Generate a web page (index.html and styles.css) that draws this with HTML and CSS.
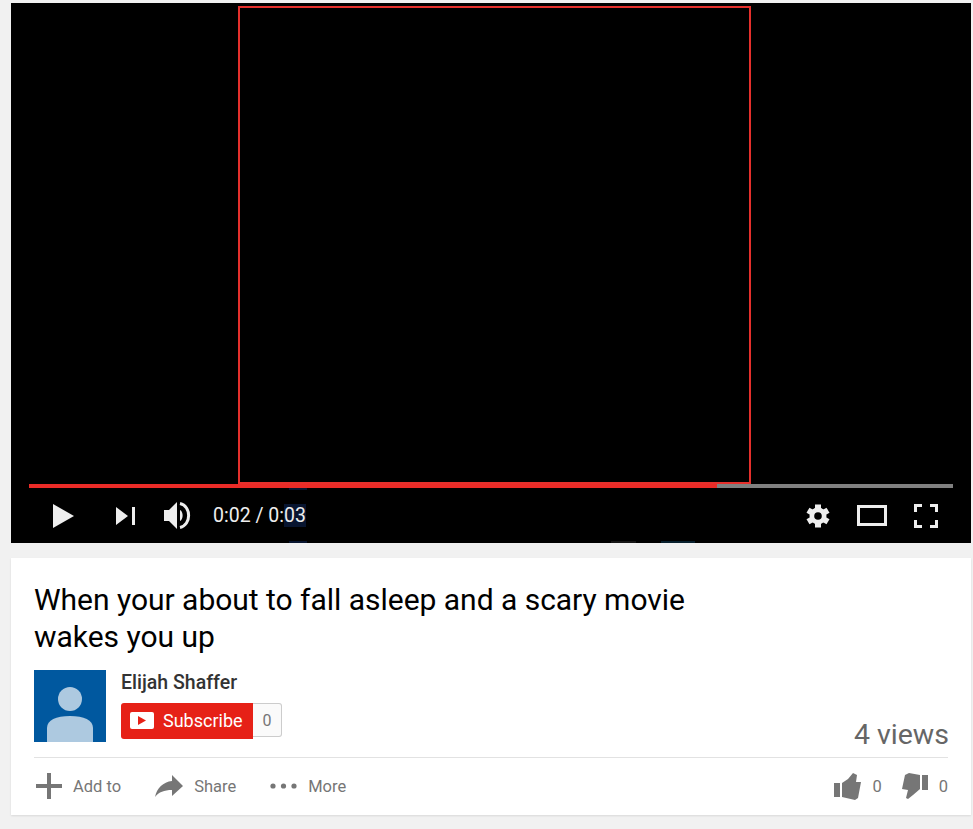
FILE: index.html
```html
<!DOCTYPE html>
<html lang="en">
<head>
<meta charset="UTF-8" />
<title>When your about to fall asleep and a scary movie wakes you up</title>
<link rel="stylesheet" href="styles.css">
</head>
<body>

<div class="player">
  <div class="stage">
    <div class="frame"></div>
  </div>
  <div class="progress">
    <div class="progress-played"></div>
  </div>
  <div class="controls">
    <svg class="ctl-play" width="22" height="24" viewBox="0 0 22 24"><path d="M0 0L21 12L0 24Z" fill="#eee"/></svg>
    <svg class="ctl-next" width="19" height="18" viewBox="0 0 19 18"><path d="M0 0L12 9L0 18Z M16 0H19V18H16Z" fill="#eee"/></svg>
    <svg class="ctl-volume" width="28" height="27" viewBox="0 0 28 27"><path d="M0 8H5L13 0V27L5 19H0Z" fill="#eee"/><path d="M16 8C19.500 9.500 19.500 17.500 16 19Z" fill="#eee"/><path d="M16 1.500C27.500 4 27.500 23 16 25.500" fill="none" stroke="#eee" stroke-width="3"/></svg>
    <div class="time">0:02 / 0:<span class="time-mark">03</span></div>
    <div class="controls-right">
      <svg class="ctl-gear" width="24" height="24" viewBox="0 0 24 24">
        <g stroke="#eee" stroke-width="6">
          <line x1="12" y1="0.500" x2="12" y2="23.500"/>
          <line x1="2" y1="6.250" x2="22" y2="17.750"/>
          <line x1="2" y1="17.750" x2="22" y2="6.250"/>
        </g>
        <circle cx="12" cy="12" r="8.500" fill="#eee"/>
        <circle cx="12" cy="12" r="3.800" fill="#000"/>
      </svg>
      <div class="ctl-theater"></div>
      <svg class="ctl-full" width="24" height="24" viewBox="0 0 24 24"><path fill="none" stroke="#eee" stroke-width="3" d="M1.500 8V1.500H8M16 1.500H22.500V8M22.500 16V22.500H16M8 22.500H1.500V16"/></svg>
    </div>
  </div>
  <!-- restos do video nas bordas -->
  <div class="glitch glitch-a"></div>
  <div class="glitch glitch-b"></div>
  <div class="glitch glitch-c"></div>
  <div class="glitch glitch-d"></div>
</div>

<div class="info">
  <h1 class="title">When your about to fall asleep and a scary movie wakes you up</h1>
  <div class="owner-row">
    <div class="avatar">
      <svg width="72" height="72" viewBox="0 0 72 72"><circle cx="36" cy="29" r="12" fill="#adc9e0"/><path d="M13 72V58C13 50 22 46 36 46C50 46 59 50 59 58V72Z" fill="#adc9e0"/></svg>
    </div>
    <div class="owner">
      <div class="owner-name">Elijah Shaffer</div>
      <div class="subscribe">
        <div class="sub-btn">
          <span class="sub-icon"><svg width="8" height="9" viewBox="0 0 8 9"><path d="M0 0L8 4.500L0 9Z" fill="#e62117"/></svg></span>
          Subscribe
        </div>
        <div class="sub-count">0</div>
      </div>
    </div>
    <div class="views">4 views</div>
  </div>
  <div class="actions">
    <div class="action action-add">
      <svg width="26" height="26" viewBox="0 0 26 26"><path d="M11 0H15V11H26V15H15V26H11V15H0V11H11Z" fill="#767676"/></svg>
      Add to
    </div>
    <div class="action action-share">
      <svg width="28" height="22" viewBox="0 0 28 22"><path d="M17 0L28 11L17 21V15C9 15 4 17 0 22C2 13 8 7 17 6Z" fill="#767676"/></svg>
      Share
    </div>
    <div class="action action-more">
      <svg width="27" height="6" viewBox="0 0 27 6"><circle cx="3" cy="3" r="2.600" fill="#767676"/><circle cx="13.500" cy="3" r="2.600" fill="#767676"/><circle cx="24" cy="3" r="2.600" fill="#767676"/></svg>
      More
    </div>
    <div class="ratings">
      <div class="action">
        <svg width="27" height="27" viewBox="0 0 27 27"><path d="M0 10H6V24H0Z M8 10L14 6L19 0L23 2L22 9H27L24 25L21 27L8 24Z" fill="#767676"/></svg>
        <span class="count">0</span>
      </div>
      <div class="action">
        <svg width="26" height="26" viewBox="0 0 26 26"><path d="M20 2H26V17H20Z M7 0L18 2V16L11 22L6 26L4 25L6 17L0 16L3 2Z" fill="#767676"/></svg>
        <span class="count">0</span>
      </div>
    </div>
  </div>
</div>

</body>
</html>
```

FILE: styles.css
```css
* {
  box-sizing: border-box;
}
body {
  margin: 0;
  padding: 3px 2px 14px 11px;
  background-color: #f1f1f1;
  font-family: Roboto, 'Liberation Sans', sans-serif;
}

/* Player */
.player {
  height: 540px;
  background-color: #000;
  display: flex;
  flex-direction: column;
  position: relative;
}
.stage {
  height: 481px;
  padding: 3px 0 0 227px;
}
.frame {
  width: 513px;
  height: 478px;
  border: 2px solid #e5302c;
}
.progress {
  height: 4px;
  margin: 0 18px;
  background-color: #808080;
}
.progress-played {
  width: 688px;
  height: 4px;
  background-color: #ea2b27;
}
.controls {
  flex: 1;
  display: flex;
  align-items: center;
  padding-left: 42px;
  color: #eee;
}
.ctl-play {
  margin-right: 41px;
}
.ctl-next {
  margin-right: 29px;
}
.ctl-volume {
  margin-right: 21px;
}
.time {
  font-size: 19.500px;
}
.time-mark {
  background-color: #081530;
}
.controls-right {
  margin-left: auto;
  padding-right: 33px;
  display: flex;
  align-items: center;
  gap: 27px;
}
.ctl-theater {
  width: 30px;
  height: 21px;
  border: 3px solid #eee;
}
.glitch {
  position: absolute;
  height: 2px;
  background-color: #081530;
}
.glitch-a {
  left: 278px;
  top: 485px;
  width: 18px;
}
.glitch-b {
  left: 278px;
  top: 538px;
  width: 18px;
}
.glitch-c {
  left: 600px;
  top: 538px;
  width: 25px;
  background-color: #161616;
}
.glitch-d {
  left: 650px;
  top: 538px;
  width: 34px;
  background-color: #08202e;
}

/* Video info */
.info {
  margin-top: 15px;
  height: 257px;
  padding: 23px 23px 0;
  background-color: #fff;
  box-shadow: 0 1px 2px rgba(0,0,0,0.1);
}
.title {
  margin: 0;
  max-width: 680px;
  font-size: 30px;
  font-weight: 400;
  letter-spacing: -0.020px;
  line-height: 37px;
  color: #000;
}
.owner-row {
  display: flex;
  margin-top: 15px;
  height: 88px;
  border-bottom: 1px solid #e2e2e2;
}
.avatar {
  width: 72px;
  height: 72px;
  background-color: #00589f;
}
.avatar svg {
  display: block;
}
.owner {
  margin-left: 15px;
}
.owner-name {
  margin-top: 1px;
  font-size: 19.500px;
  font-weight: 500;
  line-height: 24px;
  color: #333;
}
.subscribe {
  display: flex;
  margin-top: 8px;
}
.sub-btn {
  width: 132px;
  height: 36px;
  display: flex;
  align-items: center;
  padding: 0 0 1px 9px;
  gap: 9px;
  background-color: #e62117;
  border-radius: 3px 0 0 3px;
  color: #fff;
  font-size: 18px;
}
.sub-icon {
  width: 24px;
  height: 17px;
  background-color: #fff;
  border-radius: 2px;
  display: flex;
  align-items: center;
  justify-content: center;
}
.sub-count {
  width: 29px;
  height: 34px;
  display: flex;
  align-items: center;
  justify-content: center;
  background-color: #fafafa;
  border: 1px solid #ccc;
  border-left: none;
  border-radius: 0 3px 3px 0;
  color: #767676;
  font-size: 16px;
}
.views {
  margin-left: auto;
  margin-right: -1px;
  align-self: flex-end;
  padding-bottom: 6px;
  font-size: 28.500px;
  color: #666;
}
.actions {
  display: flex;
  align-items: center;
  height: 56px;
  color: #767676;
  font-size: 16.500px;
}
.action {
  display: flex;
  align-items: center;
}
.action-add {
  margin-left: 2px;
  gap: 11px;
}
.action-share {
  margin-left: 34px;
  gap: 11px;
}
.action-more {
  margin-left: 34px;
  gap: 11px;
}
.ratings {
  margin-left: auto;
  display: flex;
  gap: 20px;
}
.count {
  margin-left: 11px;
}
```
